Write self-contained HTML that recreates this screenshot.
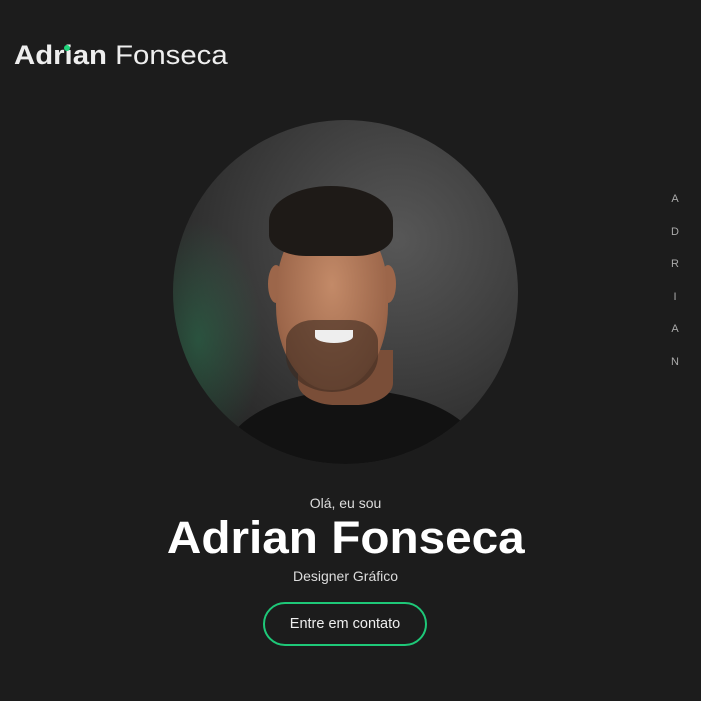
<!DOCTYPE html>
<html><head><meta charset="utf-8"><style>
html,body{margin:0;padding:0;background:#1c1c1c;width:701px;height:701px;overflow:hidden;font-family:"Liberation Sans",sans-serif;color:#fff}
.logo{position:absolute;left:14px;top:40px;font-size:27px;color:#eee;transform:scaleX(1.087);transform-origin:0 0}
.logo b{font-weight:700}
.dot{position:absolute;left:64px;top:45px;width:6px;height:6px;border-radius:50%;background:#1ed37a}
.circle{position:absolute;left:173px;top:120px;width:345px;height:344px;border-radius:50%;overflow:hidden;
background:radial-gradient(circle at 65% 35%,#575757 0%,#3c3c3c 45%,#262626 80%);}
.green{position:absolute;left:-40px;top:100px;width:130px;height:240px;border-radius:50%;background:radial-gradient(ellipse,rgba(40,140,90,.4),rgba(40,140,90,0) 70%)}
.shirt{position:absolute;left:50px;top:270px;width:260px;height:140px;border-radius:50% 50% 0 0;background:#121212}
.neck{position:absolute;left:125px;top:230px;width:95px;height:55px;background:#7a4e38;border-radius:0 0 40% 40%}
.face{position:absolute;left:103px;top:95px;width:112px;height:175px;border-radius:45% 45% 48% 48%;background:radial-gradient(ellipse at 50% 40%,#c38a68,#9c664a 70%,#6e4430)}
.beard{position:absolute;left:113px;top:200px;width:92px;height:72px;border-radius:30% 30% 50% 50%;background:#3c2a20;opacity:.6}
.mouth{position:absolute;left:142px;top:210px;width:38px;height:13px;border-radius:0 0 50% 50%;background:#eee}
.hair{position:absolute;left:96px;top:66px;width:124px;height:70px;border-radius:50% 50% 30% 30%;background:#1e1a17}
.ear{position:absolute;top:145px;width:16px;height:38px;border-radius:50%;background:#9c664a}
.vert{position:absolute;left:668px;top:183px;width:14px;font-size:11px;color:#aaa;text-align:center;line-height:32.6px}
.c{position:absolute;left:0;width:691px;text-align:center;padding-left:0}
.hi{top:495px;font-size:14px;color:#ddd}
.name{top:512px;font-size:45px;font-weight:700}
.name span{display:inline-block;transform:scaleX(1.06)}
.sub{top:568px;font-size:14px;color:#ddd}
.btn{position:absolute;left:263px;top:602px;width:160px;height:40px;border:2px solid #1ec878;border-radius:22px;text-align:center;line-height:40px;font-size:14.5px;color:#eee}
</style></head><body>
<div class="logo"><b>Adrian</b> Fonseca</div>
<div class="dot"></div>
<div class="circle">
<div class="green"></div>
<div class="shirt"></div>
<div class="neck"></div>
<div class="ear" style="left:95px"></div>
<div class="ear" style="left:207px"></div>
<div class="face"></div>
<div class="beard"></div>
<div class="mouth"></div>
<div class="hair"></div>
</div>
<div class="vert">A<br>D<br>R<br>I<br>A<br>N</div>
<div class="c hi">Olá, eu sou</div>
<div class="c name"><span>Adrian Fonseca</span></div>
<div class="c sub">Designer Gráfico</div>
<div class="btn">Entre em contato</div>
</body></html>
